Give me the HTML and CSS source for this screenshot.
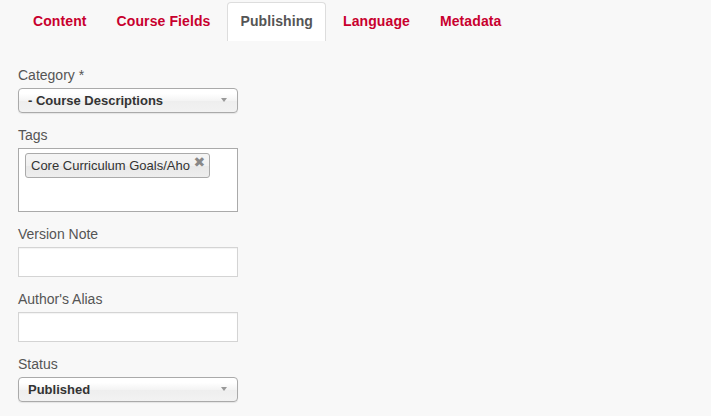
FILE: index.html
```html
<!DOCTYPE html>
<html lang="en">
<head>
    <meta charset="UTF-8">
    <meta name="viewport" content="width=device-width, initial-scale=1.0">
    <title>Edit Course</title>
    <link rel="stylesheet" href="styles.css">
</head>
<body>
    <ul class="nav-tabs">
        <li><a href="#">Content</a></li>
        <li><a href="#">Course Fields</a></li>
        <li class="active"><a href="#">Publishing</a></li>
        <li><a href="#">Language</a></li>
        <li><a href="#">Metadata</a></li>
    </ul>

    <div class="tab-pane">
        <div class="form-group">
            <label>Category *</label>
            <div class="chzn-select">
                <span>- Course Descriptions</span>
                <b class="arrow"></b>
            </div>
        </div>
        <div class="form-group">
            <label>Tags</label>
            <div class="chzn-choices">
                <span class="choice">Core Curriculum Goals/Aho <a class="remove" href="#">&#x2716;</a></span>
            </div>
        </div>
        <div class="form-group">
            <label for="version_note">Version Note</label>
            <input type="text" id="version_note">
        </div>
        <div class="form-group">
            <label for="created_by_alias">Author's Alias</label>
            <input type="text" id="created_by_alias">
        </div>
        <div class="form-group">
            <label>Status</label>
            <div class="chzn-select">
                <span>Published</span>
                <b class="arrow"></b>
            </div>
        </div>
    </div>
</body>
</html>
```

FILE: styles.css
```css
body {
    font-family: "Liberation Sans", Arial, sans-serif;
    background-color: #f8f8f8;
    margin: 0;
    padding: 0;
    color: #555;
}
.nav-tabs {
    list-style: none;
    margin: 0;
    padding: 2px 0 0 20px;
    display: flex;
    gap: 4px;
}
.nav-tabs li a {
    display: block;
    padding: 10px 12px 11px;
    font-size: 14px;
    font-weight: bold;
    letter-spacing: 0.1px;
    line-height: 17px;
    color: #c8002e;
    text-decoration: none;
    border: 1px solid transparent;
    border-bottom: none;
    border-radius: 4px 4px 0 0;
}
.nav-tabs li.active a {
    background: #fff;
    border-color: #ddd;
    color: #555;
}
.tab-pane {
    padding: 25px 18px 0;
}
.form-group {
    margin-bottom: 13px;
}
.form-group label {
    display: block;
    font-size: 14px;
    line-height: 18px;
    margin-bottom: 4px;
    color: #555;
}
.chzn-select {
    position: relative;
    width: 220px;
    height: 25px;
    box-sizing: border-box;
    border: 1px solid #aaa;
    border-radius: 4px;
    background: linear-gradient(#fff 20%, #f4f4f4 50%, #eee 52%, #f2f2f2);
    box-shadow: 0 1px 1px rgba(0, 0, 0, 0.08);
    padding-left: 9px;
    font-size: 13px;
    font-weight: bold;
    line-height: 24px;
    color: #333;
}
.chzn-select .arrow {
    position: absolute;
    right: 10px;
    top: 9px;
    border-left: 3px solid transparent;
    border-right: 3px solid transparent;
    border-top: 4px solid #999;
}
.chzn-choices {
    width: 220px;
    height: 64px;
    box-sizing: border-box;
    border: 1px solid #aaa;
    background: #fff;
    padding: 4px 6px;
}
.choice {
    display: inline-block;
    height: 25px;
    box-sizing: border-box;
    border: 1px solid #aaa;
    border-radius: 3px;
    background: linear-gradient(#f4f4f4 20%, #f0f0f0 50%, #e8e8e8 52%, #eee);
    padding: 0 4px 0 5px;
    font-size: 13px;
    line-height: 23px;
    color: #333;
}
.choice .remove {
    color: #888;
    font-size: 14px;
    line-height: 14px;
    font-family: "DejaVu Sans", sans-serif;
    text-decoration: none;
    vertical-align: 3px;
}
.form-group input {
    display: block;
    width: 220px;
    height: 30px;
    box-sizing: border-box;
    margin: 0;
    border: 1px solid #d4d4d4;
    border-radius: 0;
    background: #fff;
    box-shadow: inset 0 1px 1px rgba(0, 0, 0, 0.05);
}
```
